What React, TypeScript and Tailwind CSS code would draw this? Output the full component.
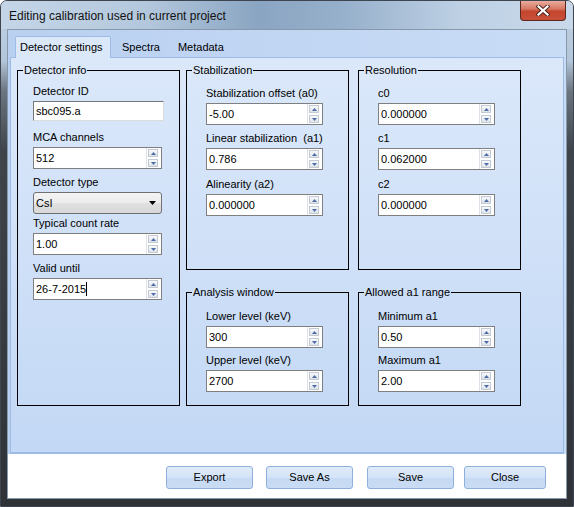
import React from "react";

function Label({ children, className = "" }: { children: React.ReactNode; className?: string }) {
  return <div className={`h-[14px] leading-[14px] text-black whitespace-pre ${className}`}>{children}</div>;
}

function SpinArrow({ down }: { down?: boolean }) {
  return (
    <div className="w-[10px] h-[8px] border border-[#c3cad4] bg-gradient-to-b from-[#f8f9fb] to-[#dfe4ea] flex items-center justify-center">
      <svg width="5" height="3" viewBox="0 0 5 3">
        <path d={down ? "M0 0H5L2.5 3Z" : "M0 3H5L2.5 0Z"} fill="#4b6ca8" />
      </svg>
    </div>
  );
}

function SpinBox({ value, width, caret, className = "" }: { value: string; width: string; caret?: boolean; className?: string }) {
  return (
    <div className={`flex h-[22px] bg-white border border-[#7f7f7f] ${width} ${className}`}>
      <div className="flex-1 pl-[2px] flex items-center leading-[13px] text-black">
        {value}
        {caret && <span className="inline-block w-px h-[14px] bg-black" />}
      </div>
      <div className="flex flex-col justify-center gap-[2px] pl-px pr-[3px] border-l border-[#dde2e8]">
        <SpinArrow />
        <SpinArrow down />
      </div>
    </div>
  );
}

function Group({ title, className, children }: { title: string; className: string; children: React.ReactNode }) {
  return (
    <fieldset className={`border border-black ${className}`}>
      <legend className="ml-[5px] px-px leading-[13px] text-black">{title}</legend>
      {children}
    </fieldset>
  );
}

function Button({ label, className }: { label: string; className: string }) {
  return (
    <button className={`h-[23px] rounded-[3px] border border-[#8eb0dc] bg-[linear-gradient(180deg,#e0ebf9_0%,#d3e3f7_50%,#c7daf3_51%,#c9dcf4_100%)] text-black text-[11px] leading-[13px] ${className}`}>
      {label}
    </button>
  );
}

export default function App() {
  return (
    <div className="w-[574px] h-[507px] flex flex-col rounded-t-[7px] overflow-hidden border border-[#3d4650] bg-[linear-gradient(180deg,#c2d3e5_0px,#b3c5d8_60px,#6b7580_90px,#3e444a_150px,#2f3338_100%)] font-['Liberation_Sans',Arial,sans-serif] text-[11px]">
      {/* Title bar */}
      <div className="h-[28px] flex items-start justify-between bg-[linear-gradient(90deg,#c4d5e7_0%,#b4c8dd_25%,#8aa5c2_45%,#97b0cb_60%,#bdd0e4_80%,#c9d9ea_100%)]">
        <span className="mt-[7px] ml-[8px] text-[12px] leading-[16px] text-[#111]">Editing calibration used in current project</span>
        <div className="w-[46px] h-[20px] mr-[7px] rounded-b-[4px] border border-t-0 border-[#5b271e] bg-[linear-gradient(180deg,#e9ac9e_0%,#d77a66_40%,#c4452d_55%,#c9503a_100%)] flex items-center justify-center">
          <svg width="14" height="11" viewBox="0 0 14 11">
            <path d="M2.5 1.5L11.5 9.5M11.5 1.5L2.5 9.5" stroke="#4a2620" strokeWidth="4" strokeLinecap="square" />
            <path d="M2.5 1.5L11.5 9.5M11.5 1.5L2.5 9.5" stroke="#ffffff" strokeWidth="2.2" strokeLinecap="square" />
          </svg>
        </div>
      </div>

      {/* Client area */}
      <div className="mx-[6px] w-[560px] h-[470px] flex flex-col border border-[#8798ab] bg-[linear-gradient(90deg,#b9d0f0_0%,#c9dcf6_100%)]">
        {/* Tabs */}
        <div className="h-[27px] flex items-end px-[2px]">
          <div className="relative z-10 -mb-px ml-[5px] w-[96px] h-[22px] border border-b-0 border-[#9dbbe4] rounded-t-[2px] bg-[#dbe8fa] pl-[4px] pt-[4px] leading-[13px] text-black">
            Detector settings
          </div>
          <span className="h-[21px] pt-[5px] ml-[11px] leading-[13px] text-black">Spectra</span>
          <span className="h-[21px] pt-[5px] ml-[18px] leading-[13px] text-black">Metadata</span>
        </div>

        {/* Pane */}
        <div className="mx-[2px] h-[397px] border border-b-2 border-[#9dbbe4] bg-gradient-to-b from-[#dbe8fa] to-[#c3d8f5] pt-[6px] pl-[6px] flex items-start">
          <Group title="Detector info" className="w-[163px] h-[342px]">
            <div className="pl-[15px] pt-[7px]">
              <Label>Detector ID</Label>
              <div className="mt-[3px] w-[131px] h-[20px] bg-white border border-t-[#777] border-l-[#777] border-r-[#dcdcdc] border-b-[#dcdcdc] pl-[2px] flex items-center leading-[13px] text-black">
                sbc095.a
              </div>
              <Label className="mt-[9px]">MCA channels</Label>
              <SpinBox value="512" width="w-[129px]" className="mt-[3px]" />
              <Label className="mt-[6px]">Detector type</Label>
              <div className="mt-[3px] w-[129px] h-[22px] rounded-[3px] border border-[#707070] bg-[linear-gradient(180deg,#f4f4f4_0%,#ececec_50%,#e0e0e0_51%,#d8d8d8_100%)] flex items-center pl-[2px] pr-[5px] text-black">
                <span className="flex-1 leading-[13px]">CsI</span>
                <svg width="7" height="4" viewBox="0 0 7 4">
                  <path d="M0 0H7L3.5 4Z" fill="#000" />
                </svg>
              </div>
              <Label className="mt-[2px]">Typical count rate</Label>
              <SpinBox value="1.00" width="w-[129px]" className="mt-[3px]" />
              <Label className="mt-[6px]">Valid until</Label>
              <SpinBox value="26-7-2015" width="w-[129px]" className="mt-[3px]" caret />
            </div>
          </Group>

          <div className="ml-[6px] flex flex-col">
            <Group title="Stabilization" className="w-[163px] h-[206px]">
              <div className="pl-[19px] pt-[9px]">
                <Label>Stabilization offset (a0)</Label>
                <SpinBox value="-5.00" width="w-[117px]" className="mt-[3px]" />
                <Label className="mt-[6px]">Linear stabilization  (a1)</Label>
                <SpinBox value="0.786" width="w-[117px]" className="mt-[3px]" />
                <Label className="mt-[7px]">Alinearity (a2)</Label>
                <SpinBox value="0.000000" width="w-[117px]" className="mt-[3px]" />
              </div>
            </Group>
            <Group title="Analysis window" className="mt-[16px] w-[163px] h-[120px]">
              <div className="pl-[19px] pt-[10px]">
                <Label>Lower level (keV)</Label>
                <SpinBox value="300" width="w-[117px]" className="mt-[3px]" />
                <Label className="mt-[5px]">Upper level (keV)</Label>
                <SpinBox value="2700" width="w-[117px]" className="mt-[3px]" />
              </div>
            </Group>
          </div>

          <div className="ml-[9px] flex flex-col">
            <Group title="Resolution" className="w-[163px] h-[206px]">
              <div className="pl-[19px] pt-[9px]">
                <Label>c0</Label>
                <SpinBox value="0.000000" width="w-[117px]" className="mt-[3px]" />
                <Label className="mt-[6px]">c1</Label>
                <SpinBox value="0.062000" width="w-[117px]" className="mt-[3px]" />
                <Label className="mt-[7px]">c2</Label>
                <SpinBox value="0.000000" width="w-[117px]" className="mt-[3px]" />
              </div>
            </Group>
            <Group title="Allowed a1 range" className="mt-[16px] w-[163px] h-[120px]">
              <div className="pl-[19px] pt-[10px]">
                <Label>Minimum a1</Label>
                <SpinBox value="0.50" width="w-[117px]" className="mt-[3px]" />
                <Label className="mt-[5px]">Maximum a1</Label>
                <SpinBox value="2.00" width="w-[117px]" className="mt-[3px]" />
              </div>
            </Group>
          </div>
        </div>

        {/* Button row */}
        <div className="flex-1 bg-white flex items-start justify-end pt-[12px] pr-[20px]">
          <Button label="Export" className="w-[87px]" />
          <Button label="Save As" className="ml-[13px] w-[87px]" />
          <Button label="Save" className="ml-[14px] w-[87px]" />
          <Button label="Close" className="ml-[10px] w-[82px]" />
        </div>
      </div>
    </div>
  );
}
